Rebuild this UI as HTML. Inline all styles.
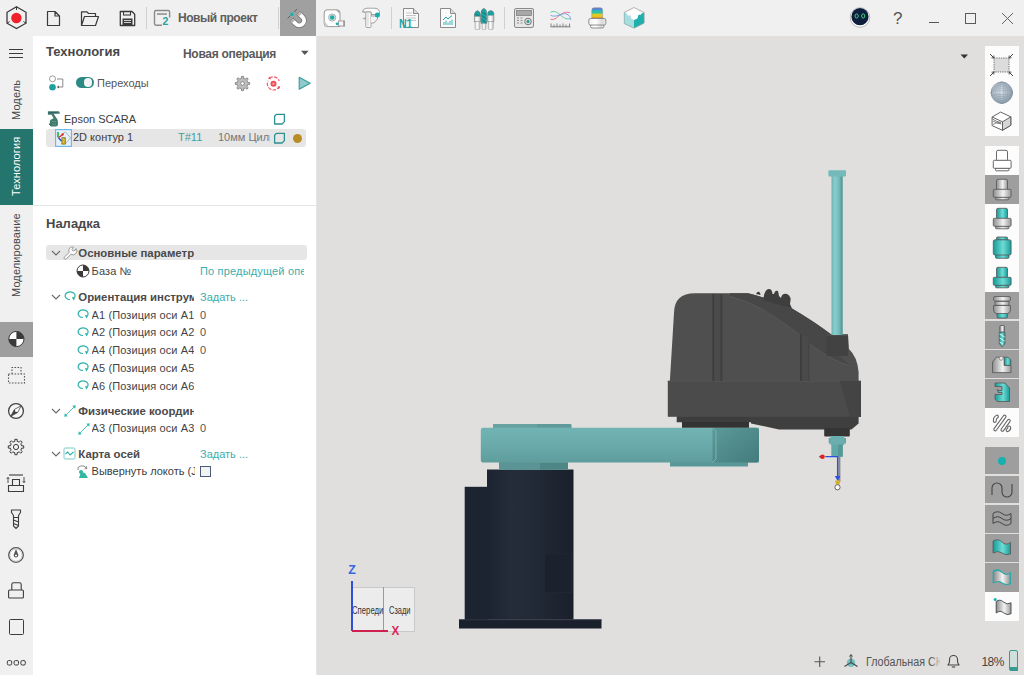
<!DOCTYPE html>
<html><head><meta charset="utf-8">
<style>
*{box-sizing:border-box;margin:0;padding:0}
html,body{width:1024px;height:675px;overflow:hidden;background:#e0dfdd;font-family:"Liberation Sans",sans-serif;color:#3c3c3c}
.a{position:absolute}
#top{left:0;top:0;width:1024px;height:36px;background:#f0f0f0}
#side{left:0;top:36px;width:33px;height:639px;background:#f0f0f0}
#panel{left:33px;top:36px;width:284px;height:639px;background:#fff}
#pline{left:316px;top:36px;width:1px;height:639px;background:#e6e6e6}
.t{position:absolute;white-space:nowrap;font-size:11px;line-height:13px}
.b{font-weight:bold}
.teal{color:#3aa3a5}
svg{position:absolute;overflow:visible}
.vt{position:absolute;transform-origin:0 0;transform:rotate(-90deg);white-space:nowrap;font-size:11px;line-height:13px;letter-spacing:.1px}
.rb{position:absolute;left:985px;width:34px;height:29px;background:#fcfcfc}
.rb.g{background:#9c9c9c}
.sep{position:absolute;width:1px;background:#d2d2d2}
</style></head><body>
<div id="top" class="a"></div>
<div id="side" class="a"></div>
<div id="panel" class="a"></div>
<div id="pline" class="a"></div>


<!-- VIEWPORT ROBOT -->
<svg style="left:0;top:0" width="1024" height="675" viewBox="0 0 1024 675">
 <defs>
  <linearGradient id="gbase" x1="0" x2="1">
   <stop offset="0" stop-color="#1d2431"/><stop offset=".3" stop-color="#252d3a"/><stop offset=".55" stop-color="#222a37"/><stop offset="1" stop-color="#1a202b"/>
  </linearGradient>
  <linearGradient id="garm" x1="0" y1="0" x2="0" y2="1">
   <stop offset="0" stop-color="#72b4b4"/><stop offset=".5" stop-color="#6aaaaa"/><stop offset="1" stop-color="#5f9d9d"/>
  </linearGradient>
  <linearGradient id="gshaft" x1="0" x2="1">
   <stop offset="0" stop-color="#6ab4b4"/><stop offset=".3" stop-color="#8ccccc"/><stop offset=".65" stop-color="#78bcbc"/><stop offset="1" stop-color="#4a9494"/>
  </linearGradient>
 </defs>
 <!-- base -->
 <rect x="464.7" y="486.8" width="23" height="133" fill="#1d2431"/>
 <rect x="487" y="469.5" width="86.5" height="150" fill="url(#gbase)"/>
 <rect x="544.5" y="554" width="27.5" height="38.7" fill="#1c222d" stroke="#262c38" stroke-width=".5"/>
 <rect x="459" y="619.5" width="142.5" height="9" fill="#1b212c"/>
 <rect x="459" y="619.5" width="142.5" height="1" fill="#262d3a"/>
 <!-- arm joint -->
 <rect x="499" y="462" width="69" height="7.8" fill="#5a9494"/>
 <rect x="540" y="463" width="28" height="6.5" fill="#4e8686"/>
 <!-- arm -->
 <rect x="493" y="423.9" width="78.5" height="5" rx="1" fill="#5f9a9a"/>
 <rect x="493" y="423.9" width="44" height="5" rx="1" fill="#66a2a2"/>
 <rect x="670" y="460" width="78" height="6.5" fill="#5a9898"/>
 <path d="M483,427.7 H759 V462.6 H483 Q480.8,462.6 480.8,460 V430.5 Q480.8,427.7 483,427.7 Z" fill="url(#garm)"/>
 <linearGradient id="gcap" x1="0" y1="0" x2="1" y2="1"><stop offset="0" stop-color="#5c9a9a"/><stop offset=".5" stop-color="#508a8a"/><stop offset="1" stop-color="#447c7c"/></linearGradient>
 <path d="M712.5,427.7 H756 Q759,427.7 759,431 V459 Q759,462.6 756,462.6 H712.5 Z" fill="url(#gcap)"/>
 <path d="M712.5,427.7 L716,431 V459 L712.5,462.6" fill="none" stroke="#7ab4b4" stroke-width="1"/>
 <!-- upper body -->
 <path d="M676.7,416 H751 V422.2 H676.7 Z" fill="#3d3d3d"/><path d="M682,422 H749 V427.8 H682 Z" fill="#333"/>
 <path d="M751,416 H858.6 V423.5 L851.5,429.5 H779 L751,423.5 Z" fill="#3f3f3f"/>
 <rect x="824.2" y="428" width="25.6" height="8.5" rx="1" fill="#353535"/>
 <path d="M674,313 Q674.2,293.3 695,293.3 H748 Q772,299 792,308.5 Q815,322 831.3,334.6 H848 L849,349 Q857.4,357 858.6,372 V382 H669.8 Z" fill="#4f4f4f"/>
 <path d="M730,293.3 H748 Q772,299 792,308.5 Q815,322 831.3,334.6 V350 L851,366 Q835,362 812,346 Q790,325 760,308 Q745,300 730,296 Z" fill="#474747"/>
 <path d="M756,294 Q757,291.5 759,291.8 Q760.5,292.5 760.5,295 Z" fill="#3a3a3a"/>
 <path d="M730,296.5 Q745,300 760,308 Q790,325 812,346 Q835,362 851,366" fill="none" stroke="#5a5a5a" stroke-width=".8"/>
 <rect x="667.8" y="380.8" width="193.2" height="36" fill="#4b4b4b"/>
 <rect x="667.8" y="380.8" width="193.2" height="1" fill="#555"/>
 <path d="M840,381 L861,381 V417 H850 Z" fill="#444"/>
 <rect x="712" y="294" width="11" height="87" fill="#4b4b4b"/>
 <rect x="712.5" y="294" width="1.6" height="87" fill="#3d3d3d"/><rect x="720.5" y="294" width="1.6" height="87" fill="#3f3f3f"/>
 <path d="M800.5,333.4 L810,338 V381 H800.5 Z" fill="#4a4a4a"/>
 <path d="M801,334 V381" stroke="#3a3a3a" stroke-width="1.4"/><path d="M808.5,338 V381" stroke="#444" stroke-width="1"/>
 <!-- bumps -->
 <path d="M763.7,297 Q765,289 769,289 Q772,289 772.5,294 L774,294 Q775,290 778,291 L779,296 L781,298 Q782,293 787,294 Q792,296 790,304 L792,308.5 L763.7,300 Z" fill="#3e3e3e"/>
 <!-- column -->
 <rect x="826.6" y="334.6" width="21.4" height="21.4" fill="#424242"/><rect x="826.6" y="334.6" width="21.4" height="1" fill="#555"/>
 <!-- spindle -->
 <rect x="831.5" y="176" width="11.2" height="159" fill="url(#gshaft)"/>
 <rect x="828.4" y="170.3" width="17.6" height="6.2" rx="1" fill="#74baba"/>
 <rect x="828.7" y="438" width="17.3" height="5.5" fill="#62a6a6"/>
 <rect x="830.5" y="436" width="13.7" height="9" fill="#6aaeae"/>
 <rect x="831.3" y="444.7" width="11.4" height="12" fill="#62a8a8"/>
 <rect x="838" y="444.7" width="4.7" height="12" fill="#559898"/>
 <!-- tool + axes -->
 <rect x="838.2" y="456.7" width="2.2" height="25" fill="#8a8a8a"/>
 <path d="M825.3,456.7 H837.6 V478" fill="none" stroke="#2b50e0" stroke-width="1.3"/>
 <path d="M834.8,476 H840.4 L837.6,481 Z" fill="#2b50e0"/>
 <path d="M835,480.5 H840.5 L839.5,484.5 H836 Z" fill="#d8b030"/>
 <circle cx="837.5" cy="487.3" r="2.6" fill="#fff" stroke="#555" stroke-width=".9"/>
 <circle cx="822.5" cy="456.7" r="2.3" fill="#e82020"/>
 <path d="M818.8,456.7 L821,455.2 V458.2 Z" fill="#b03030"/>
</svg>

<!-- TOP TOOLBAR -->
<svg style="left:0;top:0" width="40" height="36" viewBox="0 0 40 36">
 <polygon points="16.5,6.8 26,12.3 26,23.2 16.5,28.6 7,23.2 7,12.3" fill="none" stroke="#3a3a3a" stroke-width="1.3"/>
 <circle cx="16.4" cy="18" r="5.2" fill="#f0212b"/>
 <line x1="16.5" y1="6.8" x2="16.5" y2="10" stroke="#3a3a3a" stroke-width="1"/>
 <line x1="7" y1="23.2" x2="9.6" y2="21.6" stroke="#3a3a3a" stroke-width="1"/>
 <line x1="26" y1="23.2" x2="23.4" y2="21.6" stroke="#3a3a3a" stroke-width="1"/>
</svg>
<svg style="left:46px;top:10px" width="16" height="17" viewBox="0 0 16 17">
 <path d="M1.5,1.5 H9 L13.5,6 V15.5 H1.5 Z M9,1.5 V6 H13.5" fill="none" stroke="#3a3a3a" stroke-width="1.2" stroke-linejoin="round"/>
</svg>
<svg style="left:80px;top:10px" width="20" height="17" viewBox="0 0 20 17">
 <path d="M1.5,15.5 V1.8 H7 L8.5,3.5 H15.5 V6.5 M1.5,15.5 L4.5,6.5 H18.5 L15.5,15.5 Z" fill="none" stroke="#3a3a3a" stroke-width="1.2" stroke-linejoin="round"/>
</svg>
<svg style="left:119px;top:10px" width="17" height="17" viewBox="0 0 17 17">
 <path d="M1.3,1.5 H13 L15.7,4.2 V15.5 H1.3 Z" fill="none" stroke="#3a3a3a" stroke-width="1.3" stroke-linejoin="round"/>
 <rect x="4.5" y="1.5" width="7" height="3.5" fill="none" stroke="#3a3a3a" stroke-width="1.1"/>
 <rect x="3.5" y="8.5" width="10" height="7" fill="#3a3a3a"/>
 <rect x="5" y="10" width="7" height="1" fill="#cfcfcf"/><rect x="5" y="12" width="7" height="1" fill="#cfcfcf"/>
</svg>
<div class="a" style="left:146px;top:7px;width:1px;height:22px;background:#d0d0d0"></div>
<svg style="left:150px;top:5px" width="25" height="25" viewBox="0 0 25 25">
 <path d="M11.9,20.2 H5.9 Q4.5,20.2 4.5,18.8 V6.9 Q4.5,5.5 5.9,5.5 H18.2 Q19.6,5.5 19.6,6.9 V12.6" fill="none" stroke="#8a8a8a" stroke-width="1.4"/>
 <rect x="7" y="8.3" width="9.9" height="1.5" fill="#8a8a8a"/>
 <text x="12.5" y="19.6" font-family="Liberation Sans" font-weight="bold" font-size="10.5" fill="#2aa0a0">2</text>
</svg>
<div class="t b" style="left:178px;top:11px;font-size:12px;line-height:14px;letter-spacing:-0.45px;color:#5e5e5e">Новый проект</div>
<div class="a" style="left:278px;top:7px;width:1px;height:22px;background:#d0d0d0"></div>
<div class="a" style="left:280px;top:0;width:36px;height:36px;background:#a0a0a0"></div>
<svg style="left:280px;top:0" width="36" height="36" viewBox="0 0 36 36">
 <g transform="translate(15.9 17.2) scale(1.1) translate(-15.5 -15.5) rotate(-45 15.5 15.5)">
  <path d="M11.1,14.3 V19.8 A4.4,4.4 0 0 0 19.9,19.8 V14.3" fill="none" stroke="#6e6e6e" stroke-width="4.8"/>
  <path d="M11.1,14.8 V19.8 A4.4,4.4 0 0 0 19.9,19.8 V14.8" fill="none" stroke="#fff" stroke-width="3.6"/>
  <path d="M11.1,14.8 V16.8 M19.9,14.8 V16.8" stroke="#b4b4b4" stroke-width="3.6"/>
  <path d="M9.4,11 H12.8 M17.8,11 H21.2" stroke="#555" stroke-width=".8"/>
  <circle cx="14.8" cy="11" r="1.6" fill="#17b3b3"/>
 </g>
</svg>


<!-- tape measure -->
<svg style="left:318px;top:4px" width="32" height="28" viewBox="0 0 32 28">
 <path d="M9,5.8 H19 Q22,5.8 22,8.8 V22.6 H9 Q6.2,22.6 6.2,19.8 V9 Q6.2,5.8 9,5.8 Z" fill="#fdfdfd" stroke="#9a9a9a" stroke-width="1"/>
 <path d="M18,6 H19.5 Q21.8,6 21.8,8.5 V10 Z" fill="#a8a8a8"/>
 <path d="M6.5,17 L11,22.4 H9 Q6.5,22.4 6.5,20 Z" fill="#d0d0d0"/>
 <circle cx="14.2" cy="13.5" r="3.6" fill="#e6e6e6" stroke="#a0a0a0" stroke-width=".8"/>
 <circle cx="14.2" cy="13.5" r="2.3" fill="#17aeae"/>
 <rect x="20.5" y="17" width="6" height="5" fill="#f6f6f6" stroke="#9a9a9a" stroke-width=".9"/>
 <rect x="25.2" y="16.6" width="1.6" height="5.8" fill="#9a9a9a"/>
 <circle cx="19.1" cy="19.8" r="1.4" fill="#17aeae"/>
</svg>
<!-- caliper -->
<svg style="left:358px;top:4px" width="24" height="28" viewBox="0 0 24 28">
 <path d="M4.4,8 Q5,4.2 9,4.2 H17 Q20.5,4.2 21.5,7.5 V10.5 H13 V8 Z" fill="#fbfbfb" stroke="#9a9a9a" stroke-width=".9"/>
 <path d="M4.4,6.5 L6.8,8 V9 L4.4,8 Z" fill="#aaa"/>
 <path d="M7.8,8 H13 V22.5 Q13,23.5 12,23.5 H9 Q7.8,23.5 7.8,22.5 Z" fill="#fbfbfb" stroke="#9a9a9a" stroke-width=".9"/>
 <path d="M13,12 H19.5 V15 L16,19 H13" fill="#f4f4f4" stroke="#9a9a9a" stroke-width=".9"/>
 <path d="M4.4,14.5 L7.8,13 V16 Z" fill="#aaa"/>
 <path d="M10,9 V22" stroke="#c8c8c8" stroke-width=".8"/>
 <circle cx="19.4" cy="10.9" r="2.5" fill="#17aeae"/>
</svg>
<div class="a" style="left:391px;top:7px;width:1px;height:22px;background:#d0d0d0"></div>
<!-- N1 doc -->
<svg style="left:399px;top:7px" width="22" height="22" viewBox="0 0 22 22">
 <path d="M4.5,1.5 H14.5 L19.5,6.5 V20.5 H4.5 Z" fill="#fafafa" stroke="#8a8a8a" stroke-width="1"/>
 <path d="M14.5,1.5 V6.5 H19.5" fill="#ddd" stroke="#8a8a8a" stroke-width="1"/>
 <path d="M7,6 H13 M7,8.5 H17 M7,11 H17 M7,13.5 H17" stroke="#c8c8c8" stroke-width="1"/>
 <text x="0" y="20.6" font-family="Liberation Sans" font-weight="bold" font-size="12" fill="#1fa6a6" textLength="13.5" lengthAdjust="spacingAndGlyphs">N1</text>
</svg>
<!-- chart doc -->
<svg style="left:438px;top:7px" width="20" height="22" viewBox="0 0 20 22">
 <path d="M2.5,1.5 H12.5 L17.5,6.5 V20.5 H2.5 Z" fill="#fafafa" stroke="#8a8a8a" stroke-width="1"/>
 <path d="M12.5,1.5 V6.5 H17.5" fill="#ddd" stroke="#8a8a8a" stroke-width="1"/>
 <path d="M5,13 L8,10 L10,12 L14,8.5" fill="none" stroke="#1fa6a6" stroke-width="1"/>
 <path d="M6,18 V15 M8,18 V13.5 M10,18 V15.5 M12,18 V14 M14,18 V12.5" stroke="#5ec0c0" stroke-width="1.2"/>
</svg>
<!-- tools -->
<svg style="left:466px;top:2px" width="36" height="32" viewBox="0 0 36 32">
 <defs><linearGradient id="gtw" x1="0" x2="1"><stop offset="0" stop-color="#cfcfcf"/><stop offset=".45" stop-color="#ffffff"/><stop offset="1" stop-color="#bdbdbd"/></linearGradient></defs>
 <path d="M8.4,20 V13 Q8.4,10 11.4,8.6 Q14.5,10 14.5,13 V20 Z" fill="#17a3a3" stroke="#666" stroke-width=".5"/>
 <path d="M9,12 L13.5,14 M9,15 L14,17" stroke="#0d6d6d" stroke-width=".7"/>
 <rect x="8.4" y="14.5" width="6.1" height="5" fill="url(#gtw)" stroke="#999" stroke-width=".5"/>
 <rect x="9" y="19.5" width="5" height="8" rx="1" fill="url(#gtw)" stroke="#999" stroke-width=".5"/>
 <path d="M15.2,21.5 V10 Q15.2,7.5 17.8,6.2 Q20.6,7.5 20.6,10 V21.5 Z" fill="#17a8a6" stroke="#666" stroke-width=".5"/>
 <path d="M15.5,9.5 L20.5,13 M15.5,13.5 L20.5,17 M15.5,17.5 L20.5,21" stroke="#0d6d6d" stroke-width=".8"/>
 <rect x="16" y="21.5" width="4" height="6" rx="1" fill="url(#gtw)" stroke="#999" stroke-width=".5"/>
 <path d="M21.7,20 V11.5 Q21.7,9 24.7,8.4 Q27.8,9 27.8,11.5 V20 Z" fill="#17a3a3" stroke="#666" stroke-width=".5"/>
 <rect x="21.7" y="13.4" width="6.1" height="6.1" fill="url(#gtw)" stroke="#999" stroke-width=".5"/>
 <rect x="22.3" y="19.5" width="5" height="8" rx="1" fill="url(#gtw)" stroke="#999" stroke-width=".5"/>
</svg>
<div class="a" style="left:504px;top:7px;width:1px;height:22px;background:#d0d0d0"></div>
<!-- calculator -->
<svg style="left:513px;top:7px" width="22" height="22" viewBox="0 0 22 22">
 <rect x="1.5" y="1.5" width="19" height="19" rx="1.5" fill="#e6e6e6" stroke="#8a8a8a" stroke-width="1"/>
 <rect x="3.5" y="3.5" width="15" height="5" fill="#a8a8a8" stroke="#777" stroke-width=".7"/>
 <path d="M4,11 h2 M7.5,11 h2 M4,13.5 h2 M7.5,13.5 h2 M4,16 h2 M7.5,16 h2" stroke="#8a8a8a" stroke-width="1.2"/>
 <circle cx="15" cy="14.5" r="3.3" fill="#ddd" stroke="#777" stroke-width="1"/>
 <circle cx="15" cy="14.5" r="1.5" fill="#1a9c9c"/>
</svg>
<!-- curves -->
<svg style="left:548px;top:8px" width="24" height="22" viewBox="0 0 24 22"><g transform="translate(0,2.2)">
 <path d="M2.5,2.2 C6,0 9,2 12,4.5 S18,9.5 22,8.5" fill="none" stroke="#50c8a0" stroke-width=".9"/>
 <path d="M2.5,9 C7,10.5 10,6 13,4 S19,1.5 22,2.5" fill="none" stroke="#e86a80" stroke-width=".9"/>
 <path d="M2.5,5 C5,6.5 8,6 11,5 S17,2.5 20,4.5 S22,9 23,10" fill="none" stroke="#6a9ae8" stroke-width=".9"/>
 </g>
 <path d="M2.5,18.8 H22.5" stroke="#777" stroke-width="1"/>
 <path d="M3,15.5 V18.5 M6,16.5 V18.5 M9,15.5 V18.5 M12,16.5 V18.5 M15,15.5 V18.5 M18,16.5 V18.5 M21.5,15.5 V18.5" stroke="#777" stroke-width=".9"/>
</svg>
<!-- stack -->
<svg style="left:580px;top:2px" width="30" height="32" viewBox="0 0 30 32">
 <defs><linearGradient id="gstk" x1="0" y1="0" x2="0" y2="1">
  <stop offset="0" stop-color="#6a70d8"/><stop offset=".14" stop-color="#5a80d8"/><stop offset=".2" stop-color="#20b8c0"/><stop offset=".5" stop-color="#40c0a0"/><stop offset=".58" stop-color="#e0d020"/><stop offset=".88" stop-color="#e8c020"/><stop offset=".92" stop-color="#e07020"/><stop offset="1" stop-color="#e07020"/>
 </linearGradient>
 <linearGradient id="gwh" x1="0" x2="1"><stop offset="0" stop-color="#f0f0f0"/><stop offset=".4" stop-color="#ffffff"/><stop offset=".8" stop-color="#d8d8d8"/><stop offset="1" stop-color="#f0f0f0"/></linearGradient></defs>
 <path d="M11.8,16.6 V8 Q11.8,5.8 14,5.8 H20.4 Q22.6,5.8 22.6,8 V16.6 Z" fill="url(#gstk)" stroke="#888" stroke-width=".5"/>
 <rect x="10.5" y="22.5" width="13.4" height="3.5" rx="1.5" fill="url(#gwh)" stroke="#777" stroke-width=".8"/>
 <rect x="8.8" y="16.5" width="17" height="6.5" rx="1.5" fill="url(#gwh)" stroke="#777" stroke-width=".8"/>
</svg>
<!-- cube -->
<svg style="left:620px;top:4px" width="28" height="28" viewBox="0 0 28 28">
 <path d="M4.4,8.3 L14,3.5 L24,8.5 V19 L14,24 L4.4,19.5 Z" fill="#f6f6f6" stroke="#999" stroke-width=".7"/>
 <path d="M4.4,8.3 L14,13 L24,8.5 V19 L14,24 L4.4,19.5 Z" fill="#a6dede"/>
 <path d="M14,13 L24,8.5 V19 L14,24 Z" fill="#20b0ae"/>
 <path d="M6.5,9 L14,5 L22,9 L20.5,11 L18.5,10 L17.5,14.5 L14,16 L11,14.5 L10.5,11 L8,12 Z" fill="#ffffff"/>
 <path d="M4.4,8.3 L6,9.5 V12.5 L8,11.5 L10,14 L10.5,17 L14,19 V24 L4.4,19.5 Z" fill="#a6dede"/>
 <path d="M14,19 L17.5,17 V14 L20,12.5 L21,13.5 L22.5,12.5 L24,13.5 V19 L14,24 Z" fill="#1fb0ae"/>
 <path d="M4.4,8.3 V19.5 L14,24 L24,19 V8.5" fill="none" stroke="#8aa" stroke-width=".6"/>
</svg>
<!-- right controls -->
<svg style="left:849px;top:7px" width="23" height="23" viewBox="0 0 23 23">
 <circle cx="11" cy="10.5" r="9.8" fill="#fff" stroke="#aaa" stroke-width=".8"/>
 <circle cx="11" cy="9.7" r="8.6" fill="#0e1e3c"/>
 <ellipse cx="7.6" cy="9" rx="1.6" ry="2.1" fill="none" stroke="#3cd080" stroke-width="1"/>
 <ellipse cx="14.2" cy="9" rx="1.6" ry="2.1" fill="none" stroke="#3cd080" stroke-width="1"/>
</svg>
<div class="t" style="left:893px;top:9px;font-size:17px;line-height:20px;color:#555">?</div>
<div class="a" style="left:929px;top:22px;width:10px;height:1.3px;background:#555"></div>
<div class="a" style="left:965px;top:13px;width:11px;height:11px;border:1.1px solid #5a5a5a"></div>
<svg style="left:1001px;top:12px" width="13" height="13" viewBox="0 0 13 13">
 <path d="M1,1 L12,12 M12,1 L1,12" stroke="#666" stroke-width="1"/>
</svg>


<!-- LEFT SIDEBAR -->
<div class="a" style="left:9px;top:48.5px;width:14px;height:1.6px;background:#3c3c3c"></div>
<div class="a" style="left:9px;top:52.5px;width:14px;height:1.6px;background:#3c3c3c"></div>
<div class="a" style="left:9px;top:56.5px;width:14px;height:1.6px;background:#3c3c3c"></div>
<div class="vt" style="left:9.7px;top:120px;color:#484848">Модель</div>
<div class="a" style="left:0;top:129px;width:33px;height:76px;background:#23756e"></div>
<div class="vt" style="left:9.7px;top:196px;color:#fff">Технология</div>
<div class="vt" style="left:9.7px;top:297px;color:#484848">Моделирование</div>
<div class="a" style="left:0;top:322px;width:33px;height:35px;background:#9e9e9e"></div>
<svg style="left:0;top:322px" width="33" height="35" viewBox="0 0 33 35">
 <circle cx="16.4" cy="17" r="7.6" fill="#fff" stroke="#3a3a3a" stroke-width="1"/>
 <path d="M16.4,17 V9.4 A7.6,7.6 0 0 1 24,17 Z M16.4,17 V24.6 A7.6,7.6 0 0 1 8.8,17 Z" fill="#3a3a3a"/>
</svg>
<svg style="left:0;top:357px" width="33" height="36" viewBox="0 0 33 36">
 <path d="M12,17 V10.5 H21 V17 M8.5,17 H24.5 V26 H8.5 Z" fill="none" stroke="#555" stroke-width="1.1" stroke-dasharray="1.6 1.4"/>
</svg>
<svg style="left:0;top:393px" width="33" height="36" viewBox="0 0 33 36">
 <circle cx="16" cy="18" r="7.4" fill="#f8f8f8" stroke="#444" stroke-width="1.3"/>
 <path d="M21.2,12.8 L17.6,19.6 L10.8,23.2 L14.4,16.4 Z" fill="#fff" stroke="#444" stroke-width=".8" stroke-linejoin="round"/>
 <path d="M14.4,16.4 L17.6,19.6 L10.8,23.2 Z" fill="#444"/>
 <circle cx="16" cy="18" r=".9" fill="#fff"/>
</svg>
<svg style="left:0;top:429px" width="33" height="36" viewBox="0 0 33 36">
 <path d="M14.87,12.31 L14.84,10.29 L17.16,10.29 L17.13,12.31 L19.22,13.18 L20.63,11.73 L22.27,13.37 L20.82,14.78 L21.69,16.87 L23.71,16.84 L23.71,19.16 L21.69,19.13 L20.82,21.22 L22.27,22.63 L20.63,24.27 L19.22,22.82 L17.13,23.69 L17.16,25.71 L14.84,25.71 L14.87,23.69 L12.78,22.82 L11.37,24.27 L9.73,22.63 L11.18,21.22 L10.31,19.13 L8.29,19.16 L8.29,16.84 L10.31,16.87 L11.18,14.78 L9.73,13.37 L11.37,11.73 L12.78,13.18 Z" fill="none" stroke="#3c3c3c" stroke-width="1" stroke-linejoin="round"/>
 <circle cx="16" cy="18" r="2.6" fill="none" stroke="#3c3c3c" stroke-width="1"/>
</svg>
<svg style="left:0;top:465px" width="33" height="36" viewBox="0 0 33 36">
 <path d="M9,10 H23" stroke="#3c3c3c" stroke-width="1.1"/>
 <path d="M12.5,20.5 V14.5 H19.5 V20.5 M8.5,20.5 H23.5 V26.5 H8.5 Z" fill="none" stroke="#3c3c3c" stroke-width="1.1"/>
 <path d="M8,18 V12.5 M6.8,13.8 L8,12.3 L9.2,13.8 M24,12 V17.5 M22.8,16.2 L24,17.7 L25.2,16.2" fill="none" stroke="#3c3c3c" stroke-width=".9"/>
</svg>
<svg style="left:0;top:501px" width="33" height="36" viewBox="0 0 33 36">
 <path d="M11.5,9 H20.5 V11.5 L18.5,14.5 V16.5 H13.5 V14.5 L11.5,11.5 Z" fill="none" stroke="#3c3c3c" stroke-width="1.1" stroke-linejoin="round"/>
 <path d="M13.5,16.5 V25 L16,27.5 L18.5,25 V16.5 M13.5,19 L18.5,21 M13.5,22.5 L18.5,24.5" fill="none" stroke="#3c3c3c" stroke-width="1.1"/>
</svg>
<svg style="left:0;top:537px" width="33" height="36" viewBox="0 0 33 36">
 <circle cx="16" cy="18" r="7.3" fill="#fafafa" stroke="#555" stroke-width="1.3"/>
 <circle cx="16" cy="18" r="6" fill="none" stroke="#bbb" stroke-width=".6"/>
 <path d="M16,12 L18.2,17.5 A2.3,2.3 0 1 1 13.8,17.5 Z" fill="#555"/>
 <circle cx="16" cy="18.4" r="1" fill="#fff"/>
</svg>
<svg style="left:0;top:573px" width="33" height="36" viewBox="0 0 33 36">
 <path d="M11.8,17 V11.5 Q11.8,9.8 13.5,9.8 H19.5 Q21.2,9.8 21.2,11.5 V17" fill="none" stroke="#3c3c3c" stroke-width="1.1"/>
 <rect x="8.6" y="17" width="14.8" height="8" rx="1" fill="none" stroke="#3c3c3c" stroke-width="1.1"/>
</svg>
<div class="a" style="left:8.5px;top:619px;width:15.5px;height:16px;border:1.1px solid #3c3c3c;border-radius:1.5px"></div>
<svg style="left:0;top:655px" width="33" height="14" viewBox="0 0 33 14">
 <rect x="7.3" y="5.6" width="4.4" height="4.4" rx="1.3" fill="none" stroke="#3c3c3c" stroke-width="1"/>
 <rect x="14.1" y="5.6" width="4.4" height="4.4" rx="1.3" fill="none" stroke="#3c3c3c" stroke-width="1"/>
 <rect x="20.9" y="5.6" width="4.4" height="4.4" rx="1.3" fill="none" stroke="#3c3c3c" stroke-width="1"/>
</svg>


<!-- PANEL TOP -->
<div class="t b" style="left:46px;top:44px;font-size:13px;line-height:15px;color:#484848">Технология</div>
<div class="t b" style="left:183px;top:47px;font-size:12px;line-height:14px;letter-spacing:-0.3px;color:#5a5a5a">Новая операция</div>
<svg style="left:300px;top:50px" width="10" height="6" viewBox="0 0 10 6"><path d="M1,0.8 H8.6 L4.8,5 Z" fill="#555"/></svg>
<svg style="left:48px;top:75px" width="18" height="17" viewBox="0 0 18 17">
 <circle cx="4.5" cy="3.8" r="3" fill="#fff" stroke="#9a9a9a" stroke-width="1"/>
 <circle cx="4.5" cy="12.2" r="3.3" fill="#1fa0a0"/>
 <path d="M9,4 H14.8 V12 H10" fill="none" stroke="#8a8a8a" stroke-width="1"/>
 <path d="M11,10.8 L9.3,12 L11,13.2" fill="#555" stroke="#555" stroke-width=".6"/>
</svg>
<div class="a" style="left:76px;top:77px;width:17.5px;height:11px;border-radius:6px;background:#2b8a83"></div>
<div class="a" style="left:83.5px;top:78.2px;width:8.8px;height:8.8px;border-radius:50%;background:#f4f4f4"></div>
<div class="t" style="left:97px;top:77px;color:#555">Переходы</div>
<svg style="left:234px;top:75px" width="17" height="17" viewBox="0 0 17 17">
 <path d="M7.47,3.30 L7.43,1.38 L9.57,1.38 L9.53,3.30 L11.44,4.09 L12.78,2.71 L14.29,4.22 L12.91,5.56 L13.70,7.47 L15.62,7.43 L15.62,9.57 L13.70,9.53 L12.91,11.44 L14.29,12.78 L12.78,14.29 L11.44,12.91 L9.53,13.70 L9.57,15.62 L7.43,15.62 L7.47,13.70 L5.56,12.91 L4.22,14.29 L2.71,12.78 L4.09,11.44 L3.30,9.53 L1.38,9.57 L1.38,7.43 L3.30,7.47 L4.09,5.56 L2.71,4.22 L4.22,2.71 L5.56,4.09 Z" fill="#bdbdbd" stroke="#8a8a8a" stroke-width="1" stroke-linejoin="round"/>
 <circle cx="8.5" cy="8.5" r="1.8" fill="#fff" stroke="#777" stroke-width=".8"/>
</svg>
<svg style="left:265px;top:75px" width="17" height="17" viewBox="0 0 17 17">
 <path d="M4.5,3.2 A6.2,6.2 0 0 1 14.2,6 M14.4,11 A6.2,6.2 0 0 1 2.6,10.5 A6.2,6.2 0 0 1 3,5.8" fill="none" stroke="#ef5560" stroke-width="1.1" stroke-dasharray="3.6 1.3"/>
 <path d="M4.8,1.4 L3,3.6 L5.8,4.6 Z M13.5,14.5 L15.2,12.2 L12.4,11.6 Z" fill="#ef4a55"/>
 <circle cx="8.5" cy="8.7" r="3" fill="#ef4a55"/>
 <circle cx="8.5" cy="8.7" r="1.2" fill="#f6a0a8"/>
</svg>
<svg style="left:298px;top:76px" width="14" height="15" viewBox="0 0 14 15"><path d="M1.2,1.2 L12.2,7.2 L1.2,13.2 Z" fill="#90caca" stroke="#3a9c9c" stroke-width="1.1" stroke-linejoin="round"/></svg>
<!-- tree -->
<svg style="left:44px;top:108px" width="20" height="20" viewBox="0 0 20 20">
 <path d="M3.9,3.2 H14.8 L15.7,4.2 V5.8 H9.6 L12,9.5 Q13.8,11 13.9,13.5 V17 Q13.5,18.4 12,18.4 H7 Q5.9,18.4 5.9,17 V13 Q6.2,11.6 8.2,11 L9.6,10.2 L7.6,6.8 H3.9 Z" fill="#3f7a6c"/>
 <path d="M4.5,4.6 H13" stroke="#2d5a6a" stroke-width=".8"/>
 <path d="M7.5,13.5 H12 M8,16 H12" stroke="#6aa890" stroke-width=".7"/>
 <rect x="5" y="15.6" width="1.2" height="1.4" fill="#555"/>
</svg>
<div class="t" style="left:64px;top:113px;color:#3c3c3c">Epson SCARA</div>
<svg style="left:273px;top:113px" width="13" height="12" viewBox="0 0 13 12"><path d="M3.4,1.4 H11.4 V8.6 L9,11 H1.6 V3.2 Z" fill="none" stroke="#2e8f8f" stroke-width="1.3" stroke-linejoin="round"/></svg>
<div class="a" style="left:46px;top:129px;width:260px;height:18px;border-radius:3px;background:#e6e6e6"></div>
<svg style="left:55px;top:129px" width="17" height="18" viewBox="0 0 17 18">
 <rect x=".6" y=".6" width="15.8" height="16.8" fill="#e4f0fa" stroke="#6ab4ea" stroke-width="1.1"/>
 <path d="M6,5.5 L10.5,3 L15.5,9 L10,15" fill="none" stroke="#a8a8a8" stroke-width=".8"/>
 <path d="M3,3 V8.5" stroke="#20b040" stroke-width="1.6"/>
 <path d="M3.5,8.5 L7.8,5.5" stroke="#e02828" stroke-width="1.3"/><circle cx="7.8" cy="5.4" r="1.1" fill="#e02828"/>
 <path d="M3.5,9 L6.5,12" stroke="#2040d0" stroke-width="1.3"/>
 <path d="M6.8,8.6 H10.4 V15.2 H6.8 Z" fill="#c8a830" stroke="#6a5a20" stroke-width=".6"/>
 <path d="M8,9.5 L9.3,11.5 L8,13 L9.3,14.5" fill="none" stroke="#f0e040" stroke-width=".7"/>
</svg>
<div class="t" style="left:73px;top:131px;color:#3c3c3c">2D контур 1</div>
<div class="t" style="left:178px;top:131px;color:#3a9ea3">Т#11</div>
<div class="t" style="left:218px;top:131px;width:51.5px;overflow:hidden;color:#777">10мм Цилиндрическая</div>
<svg style="left:273px;top:132px" width="13" height="12" viewBox="0 0 13 12"><path d="M3.4,1.4 H11.4 V8.6 L9,11 H1.6 V3.2 Z" fill="none" stroke="#2e8f8f" stroke-width="1.3" stroke-linejoin="round"/></svg>
<div class="a" style="left:293px;top:133.5px;width:9px;height:9px;border-radius:50%;background:#b88d25"></div>
<div class="a" style="left:33px;top:205px;width:283px;height:1px;background:#e6e6e6"></div>

<!-- NALADKA -->
<div class="t b" style="left:46px;top:216px;font-size:13px;line-height:15px;color:#484848">Наладка</div>
<div class="a" style="left:46px;top:245px;width:261px;height:15px;border-radius:3px;background:#e6e6e6"></div>
<svg style="left:51px;top:250.39999999999998px" width="10" height="7" viewBox="0 0 10 7"><path d="M1,1 L5,5 L9,1" fill="none" stroke="#6a6a6a" stroke-width="1.1"/></svg>
<svg style="left:63px;top:245.5px" width="14" height="14" viewBox="0 0 14 14"><path d="M1.2,11.2 L6.2,6.4 A3.6,3.6 0 0 1 10.6,1.2 L9,3.6 L10.2,5 L12.2,4.2 L13,2.6 A3.8,3.8 0 0 1 8,8.2 L3.2,13 Q2,13.6 1.3,12.8 Q0.6,12 1.2,11.2 Z" fill="#fafafa" stroke="#9a9a9a" stroke-width="1" stroke-linejoin="round"/></svg>
<div class="t b" style="left:78.3px;top:247.2px;width:115.7px;overflow:hidden;font-size:11.4px;color:#4a4a4a">Основные параметры</div>
<svg style="left:76px;top:263.5px" width="14" height="14" viewBox="0 0 14 14"><circle cx="7" cy="7" r="6" fill="#fff" stroke="#3a3a3a" stroke-width="1"/><path d="M7,7 V1 A6,6 0 0 1 13,7 Z M7,7 V13 A6,6 0 0 1 1,7 Z" fill="#3a3a3a"/></svg>
<div class="t" style="left:91.6px;top:265.2px;width:102.6px;overflow:hidden;color:#444;letter-spacing:.1px">База №</div>
<div class="t" style="left:200px;top:265.3px;width:104px;overflow:hidden;color:#3aaeae;letter-spacing:.17px">По предыдущей операции</div>
<svg style="left:51px;top:293.7px" width="10" height="7" viewBox="0 0 10 7"><path d="M1,1 L5,5 L9,1" fill="none" stroke="#6a6a6a" stroke-width="1.1"/></svg>
<svg style="left:63.5px;top:290.2px" width="13" height="12" viewBox="0 0 13 12"><path d="M10.5,7.5 A5,3.8 0 1 0 6,9.5" fill="none" stroke="#2ab0a8" stroke-width="1.2"/><path d="M8,7 L11.5,7.5 L9.3,10.5 Z" fill="#2ab0a8"/></svg>
<div class="t b" style="left:78.3px;top:290.5px;width:115.7px;overflow:hidden;font-size:11.4px;color:#4a4a4a">Ориентация инструмента</div>
<div class="t" style="left:200px;top:290.7px;width:100px;overflow:hidden;color:#3aaeae">Задать ...</div>
<svg style="left:77px;top:308.0px" width="13" height="12" viewBox="0 0 13 12"><path d="M10.5,7.5 A5,3.8 0 1 0 6,9.5" fill="none" stroke="#2ab0a8" stroke-width="1.2"/><path d="M8,7 L11.5,7.5 L9.3,10.5 Z" fill="#2ab0a8"/></svg>
<div class="t" style="left:91.6px;top:308.5px;width:102.6px;overflow:hidden;color:#444;letter-spacing:.1px">А1 (Позиция оси А1)</div>
<div class="t" style="left:200px;top:308.5px;width:20px;overflow:hidden;color:#555">0</div>
<svg style="left:77px;top:325.6px" width="13" height="12" viewBox="0 0 13 12"><path d="M10.5,7.5 A5,3.8 0 1 0 6,9.5" fill="none" stroke="#2ab0a8" stroke-width="1.2"/><path d="M8,7 L11.5,7.5 L9.3,10.5 Z" fill="#2ab0a8"/></svg>
<div class="t" style="left:91.6px;top:326.1px;width:102.6px;overflow:hidden;color:#444;letter-spacing:.1px">А2 (Позиция оси А2)</div>
<div class="t" style="left:200px;top:326.1px;width:20px;overflow:hidden;color:#555">0</div>
<svg style="left:77px;top:343.5px" width="13" height="12" viewBox="0 0 13 12"><path d="M10.5,7.5 A5,3.8 0 1 0 6,9.5" fill="none" stroke="#2ab0a8" stroke-width="1.2"/><path d="M8,7 L11.5,7.5 L9.3,10.5 Z" fill="#2ab0a8"/></svg>
<div class="t" style="left:91.6px;top:344.0px;width:102.6px;overflow:hidden;color:#444;letter-spacing:.1px">А4 (Позиция оси А4)</div>
<div class="t" style="left:200px;top:344.0px;width:20px;overflow:hidden;color:#555">0</div>
<svg style="left:77px;top:361.1px" width="13" height="12" viewBox="0 0 13 12"><path d="M10.5,7.5 A5,3.8 0 1 0 6,9.5" fill="none" stroke="#2ab0a8" stroke-width="1.2"/><path d="M8,7 L11.5,7.5 L9.3,10.5 Z" fill="#2ab0a8"/></svg>
<div class="t" style="left:91.6px;top:361.6px;width:102.6px;overflow:hidden;color:#444;letter-spacing:.1px">А5 (Позиция оси А5)</div>
<svg style="left:77px;top:379.1px" width="13" height="12" viewBox="0 0 13 12"><path d="M10.5,7.5 A5,3.8 0 1 0 6,9.5" fill="none" stroke="#2ab0a8" stroke-width="1.2"/><path d="M8,7 L11.5,7.5 L9.3,10.5 Z" fill="#2ab0a8"/></svg>
<div class="t" style="left:91.6px;top:379.6px;width:102.6px;overflow:hidden;color:#444;letter-spacing:.1px">А6 (Позиция оси А6)</div>
<svg style="left:51px;top:407.7px" width="10" height="7" viewBox="0 0 10 7"><path d="M1,1 L5,5 L9,1" fill="none" stroke="#6a6a6a" stroke-width="1.1"/></svg>
<svg style="left:62.5px;top:403.9px" width="14" height="14" viewBox="0 0 14 14"><path d="M2.5,11.5 L11.5,2.5" stroke="#36bcae" stroke-width=".9"/><path d="M1.2,12.8 L1.8,9.2 L4.8,12.2 Z M12.8,1.2 L12.2,4.8 L9.2,1.8 Z" fill="#36bcae"/></svg>
<div class="t b" style="left:78.3px;top:404.5px;width:115.7px;overflow:hidden;font-size:11.4px;color:#4a4a4a">Физические координаты</div>
<svg style="left:77px;top:421.5px" width="14" height="14" viewBox="0 0 14 14"><path d="M2.5,11.5 L11.5,2.5" stroke="#36bcae" stroke-width=".9"/><path d="M1.2,12.8 L1.8,9.2 L4.8,12.2 Z M12.8,1.2 L12.2,4.8 L9.2,1.8 Z" fill="#36bcae"/></svg>
<div class="t" style="left:91.6px;top:422.4px;width:102.6px;overflow:hidden;color:#444;letter-spacing:.1px">А3 (Позиция оси А3)</div>
<div class="t" style="left:200px;top:422.4px;width:20px;overflow:hidden;color:#555">0</div>
<svg style="left:51px;top:450.7px" width="10" height="7" viewBox="0 0 10 7"><path d="M1,1 L5,5 L9,1" fill="none" stroke="#6a6a6a" stroke-width="1.1"/></svg>
<svg style="left:63px;top:447px" width="13" height="13" viewBox="0 0 13 13"><rect x="1" y="1" width="11" height="11" rx="1.2" fill="#fff" stroke="#7accc4" stroke-width="1"/><path d="M2.5,7 L4.8,5 L7,8 L10.5,5" fill="none" stroke="#2ab0a8" stroke-width="1.1"/></svg>
<div class="t b" style="left:78.3px;top:447.5px;width:115.7px;overflow:hidden;font-size:11.4px;color:#4a4a4a">Карта осей</div>
<div class="t" style="left:200px;top:447.7px;width:100px;overflow:hidden;color:#3aaeae">Задать ...</div>
<svg style="left:76px;top:463.5px" width="14" height="15" viewBox="0 0 14 15"><path d="M3,14 L5,8 L9,9 L12,14 Z" fill="#30b8a0"/><path d="M2,6 A4,3 0 0 1 10,4 M10,2 L11,4.5 L8.5,5" fill="none" stroke="#8a8a8a" stroke-width="1"/><circle cx="5" cy="8" r="2" fill="#30b8a0"/></svg>
<div class="t" style="left:91.6px;top:465.3px;width:103.9px;overflow:hidden;color:#3c3c3c">Вывернуть локоть (J5)</div>
<div class="a" style="left:199.5px;top:465.5px;width:11.5px;height:11px;border:1.2px solid #4a5a78;background:#f2f2f2"></div>

<!-- RIGHT TOOLBAR -->
<svg width="0" height="0" style="position:absolute"><defs>
<linearGradient id="gm" x1="0" x2="1"><stop offset="0" stop-color="#8e8e8e"/><stop offset=".55" stop-color="#f2f2f2"/><stop offset="1" stop-color="#9a9a9a"/></linearGradient>
<linearGradient id="gt" x1="0" x2="1"><stop offset="0" stop-color="#159a98"/><stop offset=".55" stop-color="#6fdcd4"/><stop offset="1" stop-color="#1a9c9a"/></linearGradient>
<linearGradient id="gw" x1="0" x2="1"><stop offset="0" stop-color="#ffffff"/><stop offset="1" stop-color="#ffffff"/></linearGradient>
</defs></svg>
<svg style="left:960px;top:54px" width="9" height="5" viewBox="0 0 9 5"><path d="M0.5,0.5 H8 L4.25,4.5 Z" fill="#333"/></svg>
<div class="a" style="left:985px;top:46px;width:34px;height:90px;background:#fcfcfc"></div>
<div class="a" style="left:985px;top:146.00px;width:34px;height:29.24px;background:#fcfcfc"></div>
<div class="a" style="left:985px;top:175.14px;width:34px;height:29.24px;background:#9e9e9e"></div>
<div class="a" style="left:985px;top:204.28px;width:34px;height:29.24px;background:#fcfcfc"></div>
<div class="a" style="left:985px;top:233.42px;width:34px;height:29.24px;background:#fcfcfc"></div>
<div class="a" style="left:985px;top:262.56px;width:34px;height:29.24px;background:#fcfcfc"></div>
<div class="a" style="left:985px;top:291.70px;width:34px;height:27.74px;background:#9e9e9e"></div>
<div class="a" style="left:985px;top:320.84px;width:34px;height:27.74px;background:#9e9e9e"></div>
<div class="a" style="left:985px;top:349.98px;width:34px;height:27.74px;background:#9e9e9e"></div>
<div class="a" style="left:985px;top:379.12px;width:34px;height:29.24px;background:#9e9e9e"></div>
<div class="a" style="left:985px;top:408.26px;width:34px;height:29.24px;background:#fcfcfc"></div>
<div class="a" style="left:985px;top:446.50px;width:34px;height:27.74px;background:#9e9e9e"></div>
<div class="a" style="left:985px;top:475.64px;width:34px;height:27.74px;background:#9e9e9e"></div>
<div class="a" style="left:985px;top:504.78px;width:34px;height:27.74px;background:#9e9e9e"></div>
<div class="a" style="left:985px;top:533.92px;width:34px;height:27.74px;background:#9e9e9e"></div>
<div class="a" style="left:985px;top:563.06px;width:34px;height:29.14px;background:#9e9e9e"></div>
<div class="a" style="left:985px;top:592.20px;width:34px;height:29.14px;background:#fcfcfc"></div>
<svg style="left:985px;top:46px" width="34" height="90" viewBox="0 0 34 90">
 <rect x="9" y="12" width="15" height="14" fill="#dcdcdc" stroke="#555" stroke-width=".8" stroke-dasharray="1.3 1"/>
 <path d="M5,8 L9,12 M28,8 L24,12 M5,30 L9,26 M28,30 L24,26" stroke="#444" stroke-width="1"/>
 <path d="M9,12 l-.2,-2.5 M9,12 l-2.5,-.2 M24,12 l.2,-2.5 M24,12 l2.5,-.2 M9,26 l-.2,2.5 M9,26 l-2.5,.2 M24,26 l.2,2.5 M24,26 l2.5,.2" stroke="#444" stroke-width=".9"/>
 <defs><radialGradient id="gsph" cx=".4" cy=".4" r=".65"><stop offset="0" stop-color="#dde6ec"/><stop offset=".6" stop-color="#b2c0cc"/><stop offset="1" stop-color="#8a9aa8"/></radialGradient></defs>
 <circle cx="16.8" cy="46.7" r="10.7" fill="url(#gsph)"/>
 <g fill="none" stroke="#8898a6" stroke-width=".45">
  <ellipse cx="16.8" cy="46.7" rx="2" ry="10.7"/><ellipse cx="16.8" cy="46.7" rx="6" ry="10.7"/><ellipse cx="16.8" cy="46.7" rx="10.7" ry="2"/><ellipse cx="16.8" cy="46.7" rx="10.7" ry="6"/>
  <ellipse cx="16.8" cy="46.7" rx="4" ry="10.7"/><ellipse cx="16.8" cy="46.7" rx="8" ry="10.7"/>
  <ellipse cx="16.8" cy="46.7" rx="10.7" ry="4"/><ellipse cx="16.8" cy="46.7" rx="10.7" ry="8"/>
 </g>
 <circle cx="16.8" cy="46.7" r="10.7" fill="none" stroke="#7a8898" stroke-width=".6"/>
 <g transform="translate(0,58)">
 <path d="M15.6,8.1 L25.8,12.8 V21.3 L17.5,26.3 L7.1,21.6 V13 Z" fill="#fff" stroke="#555" stroke-width=".9" stroke-linejoin="round"/>
 <path d="M17.5,17.8 L25.8,12.8 V21.3 L17.5,26.3 Z" fill="#d6d6d6" stroke="#555" stroke-width=".9" stroke-linejoin="round"/>
 <path d="M7.1,13 L17.5,17.8" stroke="#555" stroke-width=".9"/>
 <path d="M7.5,15 Q12,18 16,18.5 M8,20.5 Q10.5,18 16,18.8 M8,17 Q12,19.5 16.5,20" fill="none" stroke="#666" stroke-width=".8"/>
 </g>
</svg>
<svg style="left:985px;top:146.00px" width="34" height="29" viewBox="0 0 34 29">
 <rect x="10.5" y="22" width="13.5" height="2.8" rx="1" fill="#fff" stroke="#444" stroke-width=".8"/>
 <rect x="11.5" y="4.3" width="11" height="10.5" rx="1.5" fill="#fff" stroke="#444" stroke-width=".8"/>
 <rect x="8.3" y="14.3" width="17.8" height="8" rx="1" fill="#fff" stroke="#444" stroke-width=".8"/>
</svg>
<svg style="left:985px;top:175.14px" width="34" height="29" viewBox="0 0 34 29">
 <rect x="10.5" y="22" width="13.5" height="2.8" rx="1" fill="url(#gm)" stroke="#555" stroke-width=".8"/>
 <rect x="11.5" y="4.3" width="11" height="10.5" rx="1.5" fill="url(#gm)" stroke="#555" stroke-width=".8"/>
 <rect x="8.3" y="14.3" width="17.8" height="8" rx="1" fill="url(#gm)" stroke="#555" stroke-width=".8"/>
</svg>
<svg style="left:985px;top:204.28px" width="34" height="29" viewBox="0 0 34 29">
 <rect x="10.5" y="22" width="13.5" height="2.8" rx="1" fill="url(#gm)" stroke="#555" stroke-width=".8"/>
 <rect x="11.5" y="4.3" width="11" height="10.5" rx="1.5" fill="url(#gt)" stroke="#555" stroke-width=".8"/>
 <rect x="8.3" y="14.3" width="17.8" height="8" rx="1" fill="url(#gm)" stroke="#555" stroke-width=".8"/>
</svg>
<svg style="left:985px;top:233.42px" width="34" height="29" viewBox="0 0 34 29">
 <rect x="11.5" y="4" width="11" height="3" rx="1" fill="url(#gt)" stroke="#555" stroke-width=".8"/>
 <rect x="10.5" y="21.5" width="13.5" height="3.8" rx="1" fill="url(#gt)" stroke="#555" stroke-width=".8"/>
 <rect x="8.3" y="6.8" width="17.8" height="15.2" rx="1.5" fill="url(#gt)" stroke="#555" stroke-width=".8"/>
</svg>
<svg style="left:985px;top:262.56px" width="34" height="29" viewBox="0 0 34 29">
 <rect x="10.5" y="22" width="13.5" height="2.8" rx="1" fill="url(#gt)" stroke="#555" stroke-width=".8"/>
 <rect x="11.5" y="4.3" width="11" height="10.5" rx="1.5" fill="url(#gt)" stroke="#555" stroke-width=".8"/>
 <rect x="8.3" y="14.3" width="17.8" height="8" rx="1" fill="url(#gt)" stroke="#555" stroke-width=".8"/>
</svg>
<svg style="left:985px;top:291.70px" width="34" height="29" viewBox="0 0 34 29">
 <path d="M11.5,20.5 H23 L22,26 H12.5 Z" fill="url(#gt)" stroke="#555" stroke-width=".8"/>
 <path d="M8.5,13.5 H25.5 V18 Q25.5,21 22.5,21.5 H11.5 Q8.5,21 8.5,18 Z" fill="url(#gm)" stroke="#555" stroke-width=".8"/>
 <rect x="10" y="9.3" width="14" height="4" rx="1" fill="url(#gm)" stroke="#555" stroke-width=".8"/>
 <rect x="8.5" y="4.5" width="17" height="4.5" rx="1.5" fill="url(#gm)" stroke="#555" stroke-width=".8"/>
</svg>
<svg style="left:985px;top:320.84px" width="34" height="29" viewBox="0 0 34 29">
 <path d="M14.3,11 H19.9 V22.5 L17.1,26 L14.3,22.5 Z" fill="url(#gt)" stroke="#555" stroke-width=".8"/>
 <path d="M14.5,13 L19.7,16 M14.5,17 L19.7,20 M14.5,21 L18,23" stroke="#e8f8f8" stroke-width=".9"/>
 <rect x="14.8" y="4.5" width="4.6" height="6.5" rx="1" fill="url(#gm)" stroke="#555" stroke-width=".8"/>
</svg>
<svg style="left:985px;top:349.98px" width="34" height="29" viewBox="0 0 34 29">
 <path d="M7.5,12 L11.5,7.2 H19.3 V15.3 H26 V22.6 H7.5 Z" fill="url(#gm)" stroke="#555" stroke-width=".8" stroke-linejoin="round"/>
 <path d="M19.3,7.2 H23 L25.8,10 V15.3 H19.3 Z" fill="url(#gt)" stroke="#555" stroke-width=".8"/>
 <circle cx="16.2" cy="8.3" r="2" fill="#e6e6e6" stroke="#777" stroke-width=".7"/>
</svg>
<svg style="left:985px;top:379.12px" width="34" height="29" viewBox="0 0 34 29">
 <path d="M10,4 H20 L24.5,9 V22.5 H12 L10,20 V15.5 H17 V13.5 H13 V11.5 H17 V7.5 H10 Z" fill="url(#gt)" stroke="#555" stroke-width=".8"/>
 <circle cx="12.5" cy="11" r=".8" fill="#555"/>
</svg>
<svg style="left:985px;top:408.26px" width="34" height="29" viewBox="0 0 34 29">
 <g fill="none" stroke="#666" stroke-width="3.9" stroke-linecap="round"><path d="M9.8,13 Q9.5,10 12,8.6 M10.2,21.4 L19.6,8.6 M17.4,21.8 L23.8,12.8 M22.6,22.2 Q24.6,21 24.2,19.4"/></g>
 <g fill="none" stroke="#fcfcfc" stroke-width="1.7" stroke-linecap="round"><path d="M9.8,13 Q9.5,10 12,8.6 M10.2,21.4 L19.6,8.6 M17.4,21.8 L23.8,12.8 M22.6,22.2 Q24.6,21 24.2,19.4"/></g>
</svg>
<div class="a" style="left:998px;top:456.5px;width:8px;height:8px;border-radius:50%;background:#17b0b0"></div>
<svg style="left:985px;top:475.14px" width="34" height="29" viewBox="0 0 34 29">
 <path d="M7,20 V13 A5,5 0 0 1 17,13 V17 A5,5 0 0 0 27,17 V9" fill="none" stroke="#444" stroke-width="1.1"/>
</svg>
<svg style="left:985px;top:504.28px" width="34" height="29" viewBox="0 0 34 29">
 <g fill="none" stroke="#444" stroke-width="1"><path d="M8,9.5 Q12.5,6 17,9.5 T26,9.5 M8,14.5 Q12.5,11 17,14.5 T26,14.5 M8,19.5 Q12.5,16 17,19.5 T26,19.5 M8,9.5 V19.5 M26,9.5 V19.5"/></g>
</svg>
<svg style="left:985px;top:533.42px" width="34" height="29" viewBox="0 0 34 29">
 <path d="M8,8 Q13,5 17,9 T25.5,9.5 V21 Q21,23 17,20 T8,20 Z" fill="url(#gt)" stroke="#555" stroke-width=".8"/>
</svg>
<svg style="left:985px;top:562.56px" width="34" height="29" viewBox="0 0 34 29">
 <path d="M8,8 Q13,5 17,9 T25.5,9.5 V21 Q21,23 17,20 T8,20 Z" fill="#22aaa8" stroke="#22aaa8" stroke-width=".8"/>
 <path d="M8.9,9.1 Q13.3,6.6 17,10.1 T24.7,10.4 V20.3 Q20.8,22 17,19.3 T8.9,19.3 Z" fill="url(#gm)"/>
</svg>
<svg style="left:985px;top:591.70px" width="34" height="29" viewBox="0 0 34 29">
 <path d="M11.2,9.5 Q15,6.6 18.5,10 T26,10.8 V21.8 Q22,23.8 18.5,20.8 T11.2,21 Z" fill="url(#gm)" stroke="#444" stroke-width=".9"/>
 <circle cx="10.2" cy="7.6" r="1.5" fill="#17b0b0"/>
</svg>


<!-- VIEW CUBE -->
<div class="a" style="left:352px;top:587px;width:62.5px;height:44.5px;background:#ececec;border:1px solid #c9c9c9;border-left:none"></div>
<div class="a" style="left:383.3px;top:587px;width:1px;height:44px;background:#9a9a9a"></div>
<div class="t" style="left:352px;top:603.5px;font-size:11px;transform:scaleX(0.705);transform-origin:0 0;color:#333">Спереди</div>
<div class="t" style="left:388.5px;top:603.5px;font-size:11px;transform:scaleX(0.68);transform-origin:0 0;color:#333">Сзади</div>
<div class="a" style="left:351.2px;top:580.8px;width:1.6px;height:50.5px;background:#2f4fd8"></div>
<div class="a" style="left:352px;top:630.4px;width:36px;height:1.8px;background:#d02050"></div>
<div class="t" style="left:348px;top:562.5px;font-size:13px;line-height:14px;font-weight:bold;color:#3568e0;transform:scaleX(0.95)">Z</div>
<div class="t" style="left:391px;top:624px;font-size:13px;line-height:14px;font-weight:bold;color:#d82858;transform:scaleX(0.9)">X</div>
<!-- STATUS -->
<svg style="left:812px;top:654px" width="15" height="15" viewBox="0 0 15 15"><path d="M7.7,2.5 V13 M2.5,7.7 H13" stroke="#555" stroke-width="1.1"/></svg>
<svg style="left:842px;top:653px" width="18" height="16" viewBox="0 0 18 16">
 <circle cx="9" cy="9.8" r="4.2" fill="#5ab8b8" opacity=".8"/>
 <path d="M9,2 V9.5 L2.5,13.5 M9,9.5 L15.5,13.5" fill="none" stroke="#444" stroke-width="1.1"/>
 <path d="M7.5,3.5 L9,1.5 L10.5,3.5" fill="none" stroke="#444" stroke-width="1"/>
</svg>
<div class="t" style="left:865.5px;top:654.5px;width:83px;overflow:hidden;font-size:12px;line-height:14px;color:#555;transform:scaleX(0.895);transform-origin:0 0">Глобальная СК</div>
<div class="a" style="left:930px;top:650px;width:13px;height:20px;background:linear-gradient(90deg,rgba(224,223,221,0),#e0dfdd 90%)"></div>
<svg style="left:946px;top:653px" width="15" height="16" viewBox="0 0 15 16">
 <path d="M2,12 Q3.5,10.5 3.5,8 V6.5 A4,4 0 0 1 11.5,6.5 V8 Q11.5,10.5 13,12 Z" fill="none" stroke="#444" stroke-width="1.1" stroke-linejoin="round"/>
 <path d="M5.8,14 H9.2" stroke="#444" stroke-width="1.1"/>
</svg>
<div class="t" style="left:981.5px;top:655px;font-size:12px;line-height:14px;letter-spacing:-0.6px;color:#444">18%</div>
<div class="a" style="left:1009px;top:650px;width:9px;height:21px;border-radius:2px;border:1.3px solid #3a9a90;background:#cfe0dc"></div>
<div class="a" style="left:1009.5px;top:667px;width:8px;height:3.5px;background:#3a9a90"></div>

</body></html>
